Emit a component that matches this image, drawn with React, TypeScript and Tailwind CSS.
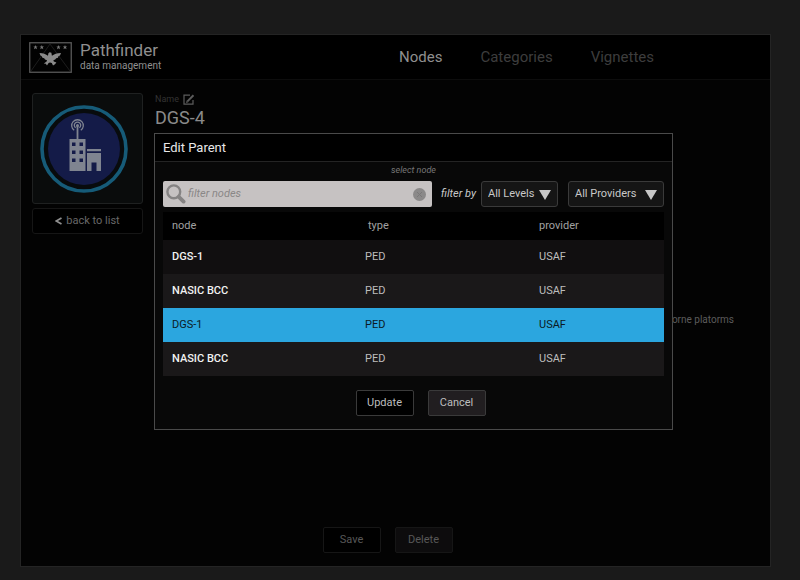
import type { ReactNode } from "react";

type Row = { id: number; node: string; type: string; provider: string };

const rows: Row[] = [
  { id: 1, node: "DGS-1", type: "PED", provider: "USAF" },
  { id: 2, node: "NASIC BCC", type: "PED", provider: "USAF" },
  { id: 3, node: "DGS-1", type: "PED", provider: "USAF" },
  { id: 4, node: "NASIC BCC", type: "PED", provider: "USAF" },
];

const selectedId = 3;

function Logo() {
  return (
    <svg width="43" height="31" viewBox="0 0 43 31" aria-hidden="true">
      <rect x="0.75" y="0.75" width="41.5" height="29.5" fill="#020202" stroke="#585858" strokeWidth="1.3" />
      <path d="M2 29L21 2L41 29" fill="none" stroke="#1d1d1d" strokeWidth="1" />
      <g fill="#777">
        {[6.5, 12.8, 29.5, 36].map((x) => (
          <path
            key={x}
            transform={`translate(${x} 5.3)`}
            d="M0-2.4L.6-.8L2.3-.7L1-.1L1.5 2L0 .9L-1.5 2L-1-.1L-2.3-.7L-.6-.8Z"
          />
        ))}
      </g>
      <path
        fill="#8a8a8a"
        d="M10.5 11C14 11.2 17 12 19 13.8L19.4 11.2L20.6 10.2L22.4 10.8L22.9 13.8C25 12 28 11.2 32 11L31 13.4L29.4 14.2L29 15.8L27.2 16.2L26.2 17.6L24.4 18.2L24.8 19.6L27.4 20.6L26 22.2L24 23.6L22.8 21L21 20.4L19.6 21L18 23.6L16.8 21.8L14.8 21.4L17.6 19.6L18 18.2L16 17.6L15.2 16.2L13.4 15.8L12.8 14.2L11.4 13.4Z"
      />
    </svg>
  );
}

function NodeBadge() {
  return (
    <svg width="88" height="88" viewBox="0 0 88 88" aria-hidden="true">
      <circle cx="44" cy="44" r="42" fill="#080b0d" stroke="#165b78" strokeWidth="3.6" />
      <circle cx="44" cy="44" r="36" fill="#141b48" />
      <g fill="none" stroke="#7f8490" strokeWidth="1.3">
        <path d="M34.2 25.3A5.8 5.8 0 1 1 40.8 25.3" />
        <path d="M35.6 22.8A3.2 3.2 0 1 1 39.4 22.8" />
      </g>
      <circle cx="37.5" cy="20.6" r="1.5" fill="#7f8490" />
      <path d="M36.6 21H38.4V35H36.6Z" fill="#7f8490" />
      <path
        fill="#7f8490"
        fillRule="evenodd"
        d="M29.5 34H45.5V66H29.5ZM32 37.5V41H35.5V37.5ZM39.5 37.5V41H43V37.5ZM32 45.5V49H35.5V45.5ZM39.5 45.5V49H43V45.5ZM32 53.5V57H35.5V53.5ZM39.5 53.5V57H43V53.5Z"
      />
      <path fill="#7f8490" d="M47 44H61V46.2H47ZM47 48H61V66H56.5V57.5H51.5V66H47Z" />
    </svg>
  );
}

function EditIcon() {
  return (
    <svg width="12" height="11" viewBox="0 0 12 11" fill="none" stroke="#5c5c5c" strokeWidth="1.2" aria-hidden="true">
      <path d="M7 1.2H1V10.2H10V6" />
      <path d="M4.4 7.4L10.5 1.2" strokeWidth="2" />
      <path d="M3 9L3.7 6.6L5.4 8.3Z" fill="#5c5c5c" stroke="none" />
    </svg>
  );
}

function SearchIcon() {
  return (
    <svg width="20" height="20" viewBox="0 0 20 20" fill="none" stroke="#858383" aria-hidden="true">
      <circle cx="7.8" cy="7.8" r="6.4" strokeWidth="2.4" />
      <path d="M12.8 12.8L17.6 17.6" strokeWidth="3.8" strokeLinecap="round" />
    </svg>
  );
}

function FilterSelect({ label, option, width }: { label: string; option: string; width: string }) {
  return (
    <div className={`relative ${width}`}>
      <select
        aria-label={label}
        className="block h-[26px] w-full appearance-none rounded-[3px] border border-[#3a3a3a] bg-[#151515] pl-[6px] text-[11px] text-[#c8c8c8]"
      >
        <option>{option}</option>
      </select>
      <svg
        width="12"
        height="10"
        viewBox="0 0 12 10"
        className="pointer-events-none absolute right-[7px] top-[9px]"
        aria-hidden="true"
      >
        <path d="M0 0H12L6 10Z" fill="#c8c8c8" />
      </svg>
    </div>
  );
}

function ActionButton({ children, tone }: { children: ReactNode; tone: string }) {
  return (
    <button type="button" className={`h-[26px] w-[58px] rounded-[2px] border text-[11px] ${tone}`}>
      {children}
    </button>
  );
}

function rowTone(row: Row, index: number) {
  if (row.id === selectedId) return "bg-[#2ba6df] text-[#0b1a24]";
  return index === 0 ? "bg-[#110f10] text-[#bdbdbd]" : "bg-[#1a1819] text-[#bdbdbd]";
}

function EditParentDialog() {
  return (
    <section
      role="dialog"
      aria-labelledby="dialog-title"
      className="absolute -left-px top-10 w-[519px] border border-[#4a4a4a] bg-[#080808]"
    >
      <h2
        id="dialog-title"
        className="flex h-7 items-center border-b border-[#242424] bg-black px-2 text-[13px] text-[#e8e8e8]"
      >
        Edit Parent
      </h2>
      <div className="px-2 pb-[13px]">
        <p className="h-[19px] pt-[2px] text-center text-[9px] italic leading-3 text-[#777]">select node</p>
        <div className="flex items-center">
          <div className="flex h-[26px] flex-1 items-center rounded-[2px] bg-[#c6c2c2] pl-[3px] pr-[6px]">
            <SearchIcon />
            <input
              type="text"
              aria-label="Filter nodes"
              placeholder="filter nodes"
              className="ml-[2px] min-w-0 flex-1 bg-transparent text-[11px] italic text-[#333] outline-none placeholder:text-[#8a8787]"
            />
            <button type="button" aria-label="Clear filter">
              <svg width="13" height="13" viewBox="0 0 13 13" aria-hidden="true">
                <circle cx="6.5" cy="6.5" r="6.5" fill="#8b8989" />
                <path d="M4 4L9 9M9 4L4 9" stroke="#7a7878" strokeWidth="1" />
              </svg>
            </button>
          </div>
          <span className="pl-[9px] pr-[5px] text-[11px] italic text-[#c8c8c8]">filter by</span>
          <FilterSelect label="Filter by level" option="All Levels" width="w-[77px]" />
          <div className="w-[10px]" />
          <FilterSelect label="Filter by provider" option="All Providers" width="w-[96px]" />
        </div>
        <table className="mt-[5px] w-full table-fixed border-collapse text-left text-[11px]">
          <colgroup>
            <col className="w-[193px]" />
            <col className="w-[174px]" />
            <col />
          </colgroup>
          <thead className="bg-black text-[#a0a0a0]">
            <tr className="h-7">
              <th className="pl-[9px] font-normal">node</th>
              <th className="pl-3 font-normal">type</th>
              <th className="pl-[9px] font-normal">provider</th>
            </tr>
          </thead>
          <tbody>
            {rows.map((row, i) => (
              <tr key={row.id} aria-selected={row.id === selectedId} className={`h-[34px] ${rowTone(row, i)}`}>
                <td className={`pl-[9px] ${row.id === selectedId ? "" : "font-medium text-[#f2f2f2]"}`}>{row.node}</td>
                <td className="pl-[9px]">{row.type}</td>
                <td className="pl-[9px]">{row.provider}</td>
              </tr>
            ))}
          </tbody>
        </table>
        <div className="mt-[14px] flex justify-center gap-[14px] pl-[14px]">
          <ActionButton tone="border-[#3a3a3a] bg-black text-[#bdbdbd]">Update</ActionButton>
          <ActionButton tone="border-[#3a3a3a] bg-[#211e20] text-[#bdbdbd]">Cancel</ActionButton>
        </div>
      </div>
    </section>
  );
}

export default function App() {
  return (
    <div className="flex min-h-screen bg-[#1a1a1a] pb-[13px] pl-5 pr-[29px] pt-[34px] font-[Roboto,sans-serif]">
      <div className="flex flex-1 flex-col border border-[#242424] bg-[#030303]">
        <header className="flex h-[45px] items-center border-b border-[#0d0d0d] bg-black pl-2">
          <Logo />
          <div className="ml-2">
            <h1 className="text-[17px] leading-[18px] text-[#8f8f8f]">Pathfinder</h1>
            <p className="text-[10px] leading-[14px] text-[#8f8f8f]">data management</p>
          </div>
          <nav className="ml-auto mr-[116px] flex gap-[38px] text-[15px]">
            <a href="#nodes" className="text-[#8f8f8f]">Nodes</a>
            <a href="#categories" className="text-[#3d3d3d]">Categories</a>
            <a href="#vignettes" className="text-[#3d3d3d]">Vignettes</a>
          </nav>
        </header>
        <div className="flex flex-1 gap-3 pl-[11px] pt-[13px]">
          <aside className="flex w-[111px] flex-col gap-[4px]">
            <div className="flex h-[111px] items-center rounded-[3px] border border-[#1f2121] bg-[#0a0c0c] pl-[7px]">
              <NodeBadge />
            </div>
            <button
              type="button"
              className="flex h-[26px] items-center justify-center gap-1 rounded-[3px] border border-[#161616] bg-black text-[11px] text-[#686868]"
            >
              <svg width="7" height="8" viewBox="0 0 7 8" fill="none" stroke="#8f8f8f" strokeWidth="1.8" aria-hidden="true">
                <path d="M6.5 1L1.2 4L6.5 7" />
              </svg>
              back to list
            </button>
          </aside>
          <main className="relative flex-1">
            <div className="flex items-center gap-1 text-[9px] leading-3 text-[#333]">
              Name
              <button type="button" aria-label="Edit name">
                <EditIcon />
              </button>
            </div>
            <p className="mt-[1px] text-[18px] leading-6 text-[#8a8a8a]">DGS-4</p>
            <p className="mr-9 mt-[182px] text-right text-[10px] leading-4 text-[#5c5c5c]">airborne platorms</p>
            <EditParentDialog />
          </main>
        </div>
        <footer className="flex justify-center gap-[14px] pb-[13px] pr-4">
          <ActionButton tone="border-[#161616] bg-black text-[#585858]">Save</ActionButton>
          <ActionButton tone="border-[#161616] bg-[#0d0c0d] text-[#585858]">Delete</ActionButton>
        </footer>
      </div>
    </div>
  );
}
